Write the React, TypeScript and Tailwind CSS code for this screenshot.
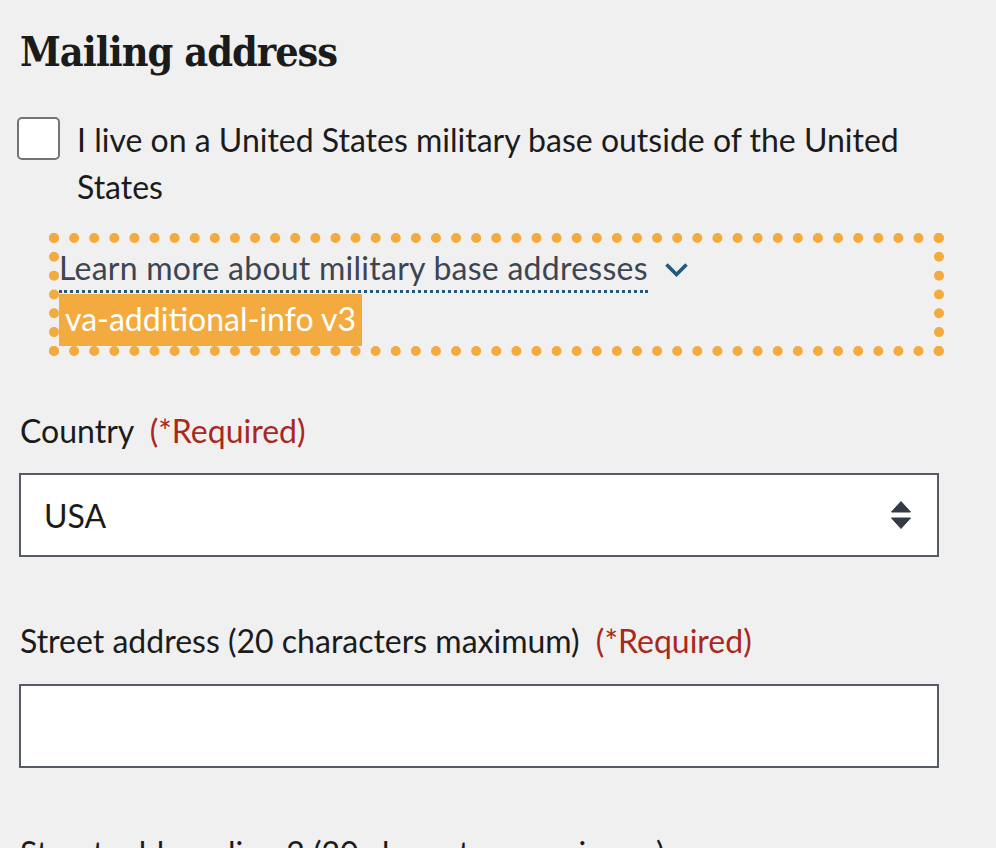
const BODY = "font-['Lato',sans-serif]";

function Required() {
  return <span className="ml-2 text-[#a8281d]">(*Required)</span>;
}

function ChevronDown() {
  return (
    <svg className="ml-4 mt-[19px] shrink-0" width="25" height="15" viewBox="0 0 25 15" fill="none">
      <path d="M2.5 2.5l10 10 10-10" stroke="#24587d" strokeWidth="3.6" />
    </svg>
  );
}

function SelectArrows() {
  return (
    <svg width="22" height="30" viewBox="0 0 22 30" fill="#333a44">
      <path d="M11 1.5l9.5 10.5H1.5z" strokeLinejoin="round" stroke="#333a44" strokeWidth="1" />
      <path d="M11 28.5L1.5 18h19z" strokeLinejoin="round" stroke="#333a44" strokeWidth="1" />
    </svg>
  );
}

export default function App() {
  return (
    <div className={`h-[848px] overflow-hidden bg-[#f0f0f0] pl-5 text-[32px] leading-[47px] text-[#1b1b1b] ${BODY}`}>
      <h2 className="pt-[24px] font-['DejaVu_Serif_Condensed','DejaVu_Serif',serif] text-[41px] font-bold leading-[56px] tracking-[-1px]">
        Mailing address
      </h2>

      <div className="mt-[37px] flex items-start">
        <div className="-ml-[3px] h-[43px] w-[43px] shrink-0 rounded-[5px] border-2 border-[#757575] bg-white" />
        <p className="ml-[17px] -mt-[1px] w-[840px]">I live on a United States military base outside of the United States</p>
      </div>

      <div className="mt-[23px] ml-[29px] w-[895px] border-[10px] border-dotted border-[#f3aa3e]">
        <div className="flex items-start text-[#3d4551]">
          <span className="border-b-[3px] border-dotted border-[#24587d] pt-[2px] leading-[45px] tracking-[0.25px]">
            Learn more about military base addresses
          </span>
          <ChevronDown />
        </div>
        <div className="mt-px h-[52px] w-fit bg-[#f3aa3e] px-[6px] leading-[50px] text-white">va-additional-info v3</div>
      </div>

      <div className="mt-[51px]">
        Country <Required />
      </div>
      <div className="-ml-px mt-[19px] flex h-[84px] w-[920px] items-center justify-between border-2 border-[#565c65] bg-white pl-[23px] pr-[25px]">
        <span>USA</span>
        <SelectArrows />
      </div>

      <div className="mt-[60px]">
        Street address (20 characters maximum) <Required />
      </div>
      <div className="-ml-px mt-[20px] h-[84px] w-[920px] border-2 border-[#565c65] bg-white" />

      <div className="mt-[61px] whitespace-nowrap">Street address line 2 (20 characters maximum)</div>
    </div>
  );
}
